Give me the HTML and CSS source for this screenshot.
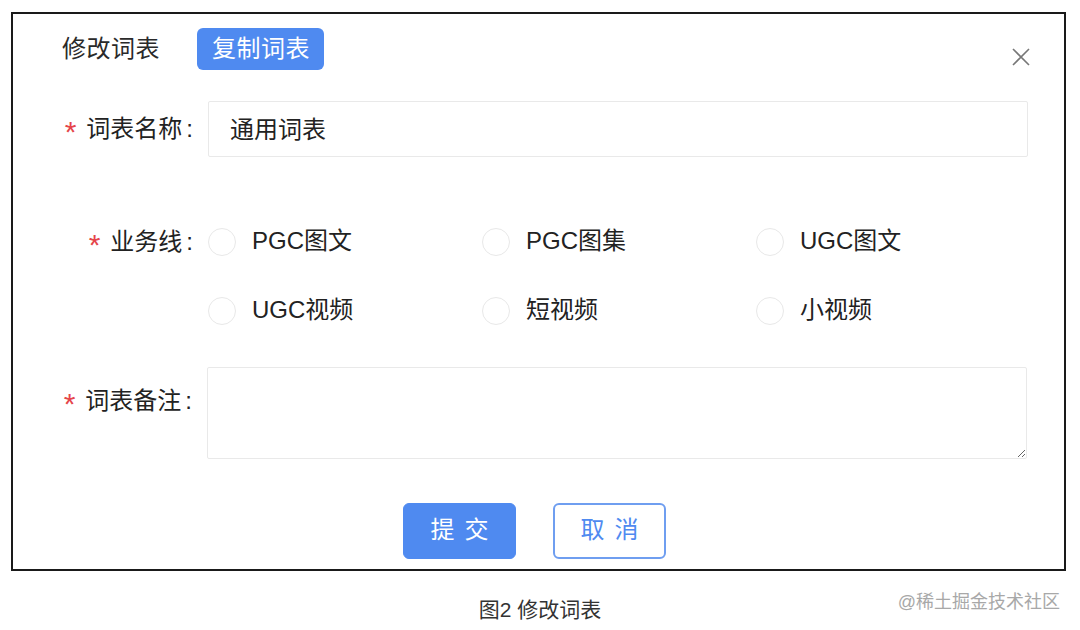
FILE: index.html
```html
<!DOCTYPE html>
<html lang="zh-CN">
<head>
<meta charset="utf-8">
<title>修改词表</title>
<link rel="stylesheet" href="styles.css">
</head>
<body>
<div class="page">
  <div class="frame">
    <div class="header">
      <span class="title">修改词表</span>
      <span class="copy-btn">复制词表</span>
      <span class="close">
        <svg width="18" height="18" viewBox="0 0 18 18"><path d="M1 1 L17 17 M17 1 L1 17" stroke="#777" stroke-width="1.6" fill="none"/></svg>
      </span>
    </div>
    <div class="form">
      <div class="row row-name">
        <div class="label"><span class="star">*</span>词表名称<span class="colon">:</span></div>
        <div class="input">通用词表</div>
      </div>
      <div class="row row-radio">
        <div class="label"><span class="star">*</span>业务线<span class="colon">:</span></div>
        <div class="radios">
          <div class="radio"><span class="circle"></span><span class="rtext">PGC图文</span></div>
          <div class="radio"><span class="circle"></span><span class="rtext">PGC图集</span></div>
          <div class="radio"><span class="circle"></span><span class="rtext">UGC图文</span></div>
          <div class="radio"><span class="circle"></span><span class="rtext">UGC视频</span></div>
          <div class="radio"><span class="circle"></span><span class="rtext">短视频</span></div>
          <div class="radio"><span class="circle"></span><span class="rtext">小视频</span></div>
        </div>
      </div>
      <div class="row row-note">
        <div class="label"><span class="star">*</span>词表备注<span class="colon">:</span></div>
        <textarea class="textarea"></textarea>
      </div>
      <div class="actions">
        <span class="btn btn-primary">提交</span>
        <span class="btn btn-ghost">取消</span>
      </div>
    </div>
  </div>
  <div class="footer">
    <span class="caption">图2 修改词表</span>
    <span class="brand">@稀土掘金技术社区</span>
  </div>
</div>
</body>
</html>
```

FILE: styles.css
```css
* { box-sizing: border-box; }
html, body { margin: 0; padding: 0; background: #fff; }
body {
  font-family: "Liberation Sans", "Noto Sans CJK SC", sans-serif;
  color: #222;
  width: 1080px;
  height: 630px;
  overflow: hidden;
}
.page { padding: 12px 0 0 11px; }
.frame {
  width: 1055px;
  height: 559px;
  border: 2px solid #1a1a1a;
  background: #fff;
  display: flex;
  flex-direction: column;
}
.header {
  display: flex;
  align-items: flex-start;
  padding: 14px 34px 0 49px;
  height: 56px;
}
.title {
  font-size: 24px;
  line-height: 42px;
  color: #2a2a2a;
  letter-spacing: 0.5px;
}
.copy-btn {
  margin-left: 37px;
  height: 42px;
  padding: 0 14px 0 15px;
  background: #4f8af0;
  color: #fff;
  font-size: 24px;
  line-height: 42px;
  border-radius: 6px;
  letter-spacing: 0.5px;
}
.close {
  margin-left: auto;
  margin-top: 20px;
  width: 18px;
  height: 18px;
  display: flex;
}
.form {
  display: flex;
  flex-direction: column;
  padding-top: 31px;
}
.row {
  display: grid;
  grid-template-columns: 183px 820px;
  column-gap: 12px;
}
.label {
  font-size: 24px;
  line-height: 56px;
  text-align: right;
  white-space: nowrap;
  color: #222;
  display: flex;
  justify-content: flex-end;
  align-items: center;
  padding-right: 3px;
}
.star {
  color: #e5454a;
  font-size: 30px;
  line-height: 1;
  height: 16px;
  margin-right: 10px;
  font-family: "Liberation Sans", sans-serif;
  display: inline-block;
  position: relative;
  top: -4px;
}
.colon {
  margin-left: 4px;
  font-family: "Liberation Sans", sans-serif;
}
.input {
  height: 56px;
  border: 1px solid #e9e9e9;
  border-radius: 2px;
  padding-left: 21px;
  font-size: 24px;
  line-height: 55px;
  color: #222;
}
.row-radio { margin-top: 65px; }
.row-radio .label { height: 40px; }
.radios {
  display: grid;
  grid-template-columns: 274px 274px 272px;
  row-gap: 29px;
}
.radio {
  display: flex;
  align-items: center;
  height: 40px;
  font-size: 24px;
  color: #222;
}
.rtext {
  line-height: 40px;
  margin-top: -3px;
}
.circle {
  width: 28px;
  height: 28px;
  border-radius: 50%;
  border: 1px solid #e8e8e8;
  margin-right: 16px;
  flex: none;
}
.row-note { margin-top: 36px; }
.row-note .label { height: 68px; padding-right: 4px; }
.textarea {
  width: 820px;
  height: 92px;
  margin: 0 0 0 -1px;
  border: 1px solid #e9e9e9;
  border-radius: 2px;
  font-family: inherit;
  font-size: 24px;
  outline: none;
  resize: both;
}
.actions {
  display: flex;
  justify-content: center;
  gap: 37px;
  margin-top: 44px;
  padding-right: 8px;
}
.btn {
  width: 113px;
  height: 56px;
  border-radius: 6px;
  font-size: 24px;
  line-height: 52px;
  text-align: center;
  letter-spacing: 10px;
  text-indent: 10px;
}
.btn-primary {
  background: #4f8af0;
  border: 1px solid #4f8af0;
  color: #fff;
}
.btn-ghost {
  background: #fff;
  border: 2px solid #6f9ef0;
  color: #4f8af0;
  line-height: 50px;
}
.footer {
  position: relative;
  height: 59px;
  display: flex;
  align-items: center;
  justify-content: center;
  padding-top: 14px;
}
.caption {
  font-size: 21px;
  color: #333;
  margin-left: -11px;
}
.brand {
  position: absolute;
  right: 20px;
  top: 16px;
  font-size: 18px;
  color: #a8a8a8;
}
```
